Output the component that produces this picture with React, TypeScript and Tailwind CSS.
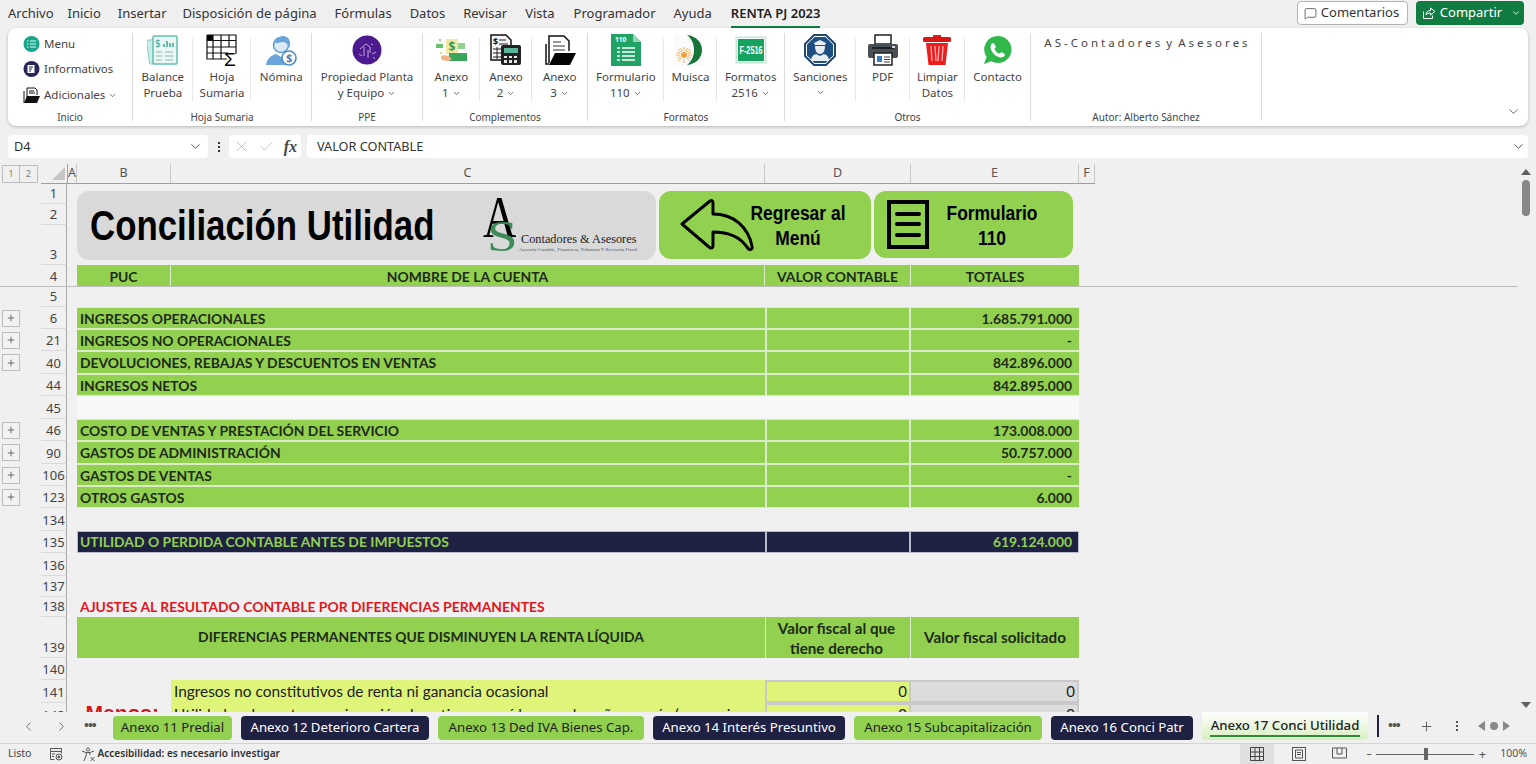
import type { ReactNode } from "react";
import { Check, ChevronDown, ChevronLeft, ChevronRight, MessageSquare, Plus, X } from "lucide-react";

const sheetFont = "font-['Lato','Noto_Sans',sans-serif]";
const narrowFont = "font-['Liberation_Sans',sans-serif]";

function MenuBar() {
  return (
    <div className="flex h-[28px] items-start justify-between pl-[8px] pr-[12px]">
      <div className="flex h-[28px] items-center gap-[18px] text-[13px] text-[#333]">
        <span className="-mr-[4px]">Archivo</span>
        <span className="-mr-[1px]">Inicio</span>
        <span className="-mr-[2px]">Insertar</span>
        <span>Disposición de página</span>
        <span>Fórmulas</span>
        <span>Datos</span>
        <span>Revisar</span>
        <span className="mr-[1px]">Vista</span>
        <span>Programador</span>
        <span className="mr-[1px]">Ayuda</span>
        <span className="relative font-semibold text-[#222]">
          RENTA PJ 2023
          <span className="absolute -bottom-[4px] left-0 right-0 h-[2px] bg-[#107c41]" />
        </span>
      </div>
      <div className="flex items-center gap-[8px] pt-[1px] text-[13px]">
        <button type="button" className="flex h-[24px] w-[111px] items-center justify-center gap-[4px] rounded-[4px] border border-[#b5b5b5] bg-white pr-[2px] text-[#333]">
          <MessageSquare size={13} strokeWidth={1.3} />
          Comentarios
        </button>
        <button type="button" className="flex h-[24px] w-[108px] items-center justify-center gap-[4px] rounded-[4px] bg-[#107c41] pl-[3px] text-white">
          <svg width="14" height="14" viewBox="0 0 14 14" fill="none" stroke="#fff" strokeWidth="1" strokeLinejoin="round">
            <path d="M1.500 5.500v7h9v-3" />
            <path d="M4 9c0-3 2-4.500 4.500-4.500V2l4.500 3.500-4.500 3.500V7C6.500 7 5 7.500 4 9Z" />
          </svg>
          Compartir
          <ChevronDown size={10} className="ml-[5px]" />
        </button>
      </div>
    </div>
  );
}

function Svg({ children, w = 32, h = 32 }: { children: ReactNode; w?: number; h?: number }) {
  return (
    <svg width={w} height={h} viewBox={`0 0 ${w} ${h}`}>
      {children}
    </svg>
  );
}

const icons: Record<string, ReactNode> = {
  balance: (
    <Svg>
      <rect x="1" y="5" width="20" height="24" rx="1.5" fill="#cdeee7" stroke="#7fcfc0" transform="rotate(-8 11 17)" />
      <rect x="6" y="2" width="24" height="28" rx="1" fill="#eaf8f5" stroke="#62bfb0" strokeWidth="1.5" />
      <text x="8" y="13" fontSize="10" fill="#4aa596">$</text>
      <path d="M17 13v-3M20 13V7M23 13v-4M26 13V9" stroke="#4aa596" strokeWidth="1.6" />
      <path d="M9 18h6M18 18h8M9 22h6M18 22h8M9 26h6M18 26h8" stroke="#8fb7b0" strokeWidth="1.2" />
    </Svg>
  ),
  sumaria: (
    <Svg>
      <rect x="1" y="1" width="6" height="5" fill="#000" />
      <path d="M1 1h29v19M1 1v24h20M1 6.500h29M1 13h29M1 19h21M7 1v24M15 1v24M23 1v12" fill="none" stroke="#111" strokeWidth="1.2" />
      <text x="18" y="32" fontSize="19" fontFamily="Liberation Sans" fill="#000" fontWeight="400">Σ</text>
    </Svg>
  ),
  nomina: (
    <Svg>
      <circle cx="16" cy="11" r="7.500" fill="#dbe9f7" stroke="#5b9bd5" strokeWidth="1.5" />
      <path d="M10 9c2-7 9-9 13-5 2 2 3 6 1 10-1-5-4-6-7-6-3 1-6 1-7 1Z" fill="#6aa6dc" />
      <path d="M1 31c1-7 6-10 10-11l5 3 4-3 4 2v9Z" fill="#6aa6dc" />
      <circle cx="24" cy="24" r="7" fill="#fff" stroke="#4c8fcb" strokeWidth="1.6" />
      <text x="21" y="28" fontSize="11" fontWeight="700" fill="#3f83c1">$</text>
    </Svg>
  ),
  ppe: (
    <Svg>
      <circle cx="16" cy="16" r="14.500" fill="#4c1a8e" />
      <path d="M9 15l6-5 4 3v6M13 13v9M17 16v8M21 20l4-2M8 20l3 2M20 10l2 1M22 23l2 2" stroke="#c9b6e8" strokeWidth="0.9" fill="none" />
    </Svg>
  ),
  anexo1: (
    <Svg w={34} h={26}>
      <rect x="12" y="2" width="12" height="15" fill="#f3e7a4" />
      <text x="14.500" y="14" fontSize="12" fontWeight="700" fill="#3f9b4b">$</text>
      <rect x="24" y="6" width="7" height="6" fill="#8fd18f" />
      <rect x="2" y="7" width="7" height="4" fill="#69c06d" />
      <rect x="15" y="16" width="18" height="8" fill="#37a65a" />
      <path d="M7 19c4-2 8 0 11 3-4 3-8 2-11 0Z" fill="#f4b183" />
      <circle cx="6" cy="3" r="1" fill="#6cc070" />
      <circle cx="7" cy="16" r="1" fill="#e5c64a" />
    </Svg>
  ),
  anexo2: (
    <Svg>
      <path d="M1 1h15l5 5v20H1Z" fill="#f4f4f4" stroke="#111" strokeWidth="1.5" />
      <text x="3" y="11" fontSize="9" fontWeight="700" fill="#111">$</text>
      <path d="M9 6h7M9 10h9M3 15h8M3 19h8M3 23h8M7 13v12" stroke="#222" />
      <rect x="11" y="11" width="20" height="20" rx="2" fill="#222" />
      <rect x="14" y="14" width="14" height="5" fill="#59b7a0" />
      <path d="M14 22h3v2h-3ZM19 22h3v2h-3ZM24 22h3v2h-3ZM14 26h3v3h-3ZM19 26h3v3h-3ZM24 26h3v3h-3Z" fill="#e5e5e5" />
    </Svg>
  ),
  anexo3: (
    <Svg>
      <path d="M5 29V2h15l5 5v10" fill="#fff" stroke="#111" strokeWidth="1.5" />
      <path d="M9 8h8M9 12h12M9 16h12" stroke="#333" />
      <path d="M2 10v20h3" fill="none" stroke="#111" strokeWidth="1.5" />
      <path d="M5 31l6-12h21l-6 12Z" fill="#050505" />
    </Svg>
  ),
  formulario: (
    <Svg w={32} h={32}>
      <path d="M1 0h22l8 8v24H1Z" fill="#21a366" />
      <path d="M23 0l8 8h-8Z" fill="#8fd6b0" />
      <text x="5" y="8" fontSize="6.500" fontWeight="700" fill="#fff">110</text>
      <path d="M7 14h3M12 14h13M7 18h3M12 18h13M7 22h3M12 22h13M7 26h3M12 26h13" stroke="#fff" strokeWidth="1.4" />
    </Svg>
  ),
  muisca: (
    <Svg>
      <rect x="0" y="0" width="30" height="32" fill="#fbfbfb" />
      <path d="M13 1c9 1 15 7 15 15s-6 14-15 15c5-4 7-9 7-15S18 5 13 1Z" fill="#16763a" />
      <circle cx="10" cy="21" r="3" fill="#f2a23a" />
      <path d="M10 13v4M10 25v4M2 21h4M14 21h4M4 15l3 3M16 15l-3 3M4 27l3-3M16 27l-3-3M6.500 14l1.500 3.500M13.500 14L12 17.500M3 18l3.500 1.500M17 18l-3.500 1.500M3 24l3.500-1.500M17 24l-3.500-1.500" stroke="#f4b563" strokeWidth="1" />
    </Svg>
  ),
  formatos: (
    <Svg w={32} h={28}>
      <rect x="0.500" y="0.500" width="31" height="27" fill="#c4e8d2" />
      <rect x="2.500" y="2.500" width="27" height="23" fill="#16a360" />
      <rect x="2.500" y="2.500" width="27" height="23" fill="none" stroke="#fff" strokeWidth="1" />
      <text x="4.500" y="18" fontSize="10.500" fontWeight="700" fontFamily="Liberation Sans" fill="#fff" textLength="23" lengthAdjust="spacingAndGlyphs">
        F-2516
      </text>
    </Svg>
  ),
  sanciones: (
    <Svg>
      <path d="M10 1h12l9 9v12l-9 9H10l-9-9V10Z" fill="#fff" stroke="#22476f" strokeWidth="2" />
      <path d="M10.500 3h11L29 10.500v11L21.500 29h-11L3 21.500v-11Z" fill="#1d4f83" />
      <path d="M10 9l6-3 6 3-1 2H11Z" fill="#e8eef4" />
      <path d="M11 12h10c0 5-2 8-5 8s-5-3-5-8Z" fill="#e8eef4" />
      <path d="M7 27c0-4 2-6 5-7l4 2 4-2c3 1 5 3 5 7Z" fill="#e8eef4" />
    </Svg>
  ),
  pdf: (
    <Svg>
      <path d="M8 1h16v9H8Z" fill="#fff" stroke="#222" strokeWidth="1.5" />
      <rect x="1" y="10" width="30" height="14" rx="2" fill="#4a4f54" />
      <rect x="5" y="13" width="22" height="2" fill="#1f2226" />
      <rect x="25" y="12" width="3" height="2" fill="#d8d8d8" />
      <path d="M7 19h18v12H7Z" fill="#fff" stroke="#222" strokeWidth="1.5" />
      <rect x="10" y="22" width="5" height="6" fill="#3d7dbb" />
      <path d="M17 23h6M17 25.500h6M17 28h6" stroke="#444" />
    </Svg>
  ),
  limpiar: (
    <Svg>
      <path d="M12 1h8v2h-8Z" fill="#e21a1a" />
      <rect x="2" y="3" width="28" height="5" rx="1.500" fill="#d81616" />
      <path d="M5 9h22l-2.500 22h-17Z" fill="#ee1c1c" />
      <path d="M10 12l1 15M14 12l1 15M18 12l-1 15M22 12l-1 15" stroke="#ffb3b3" strokeWidth="1.3" />
    </Svg>
  ),
  contacto: (
    <Svg>
      <path d="M16 2a13.500 13.500 0 0 1 0 27c-2.500 0-4.700-.6-6.700-1.700L2 30l2.600-7A13.500 13.500 0 0 1 16 2Z" fill="#30b84a" />
      <path d="M11 9c-1 0-2.500 1.500-2.500 4 0 5 6 10.500 10.500 10.500 2.500 0 4-1.500 4-3 0-.6-3-2.300-3.800-2.300-.6 0-1.300 1.400-1.900 1.400-1.500 0-4.700-3.200-4.700-4.500 0-.7 1.300-1.300 1.300-2C13.900 12 12 9 11 9Z" fill="#fff" />
    </Svg>
  ),
};

function RibbonButton({ icon, lines, arrow, width, last }: { icon: string; lines: string[]; arrow?: boolean; width: string; last?: boolean }) {
  return (
    <div className={`relative flex h-[68px] flex-col items-center ${width}`}>
      <div className="flex h-[34px] items-center justify-center">{icons[icon]}</div>
      <div className="flex flex-col items-center pt-[2px] text-[11.500px] leading-[16px] text-[#444]">
        {lines.map((line, i) => (
          <span key={line} className="flex items-center gap-[3px] whitespace-nowrap">
            {line}
            {arrow && lines.length > 1 && i === lines.length - 1 && <ChevronDown size={9} />}
          </span>
        ))}
        {arrow && lines.length === 1 && <ChevronDown size={9} className="mt-[3px]" />}
      </div>
      {!last && <span className="absolute right-0 top-[5px] h-[63px] w-px bg-[#e8e8e8]" />}
    </div>
  );
}

function RibbonGroup({ label, width, children }: { label: string; width: string; children: ReactNode }) {
  return (
    <div className={`flex h-[88px] flex-col border-r border-[#dcdcdc] ${width}`}>
      <div className="flex h-[68px] shrink-0">{children}</div>
      <div className="mt-[8px] h-[16px] shrink-0 text-center text-[10px] leading-[16px] text-[#444]">{label}</div>
    </div>
  );
}

function Ribbon() {
  return (
    <div className="relative mx-[8px] flex h-[98px] rounded-[8px] bg-white pt-[5px] shadow-[0_1px_3px_rgba(0,0,0,0.25)]">
      <RibbonGroup label="Inicio" width="w-[125px]">
        <div className="flex flex-col gap-[7px] pl-[15px] pt-[2px] text-[11.500px] leading-[18px] text-[#444]">
          <div className="flex items-center gap-[4px]">
            <svg width="17" height="18" viewBox="0 0 17 18">
              <circle cx="8.500" cy="9" r="8" fill="#17a689" />
              <path d="M4 6h1.500M7 6h6M4 9h1.500M7 9h6M4 12h1.500M7 12h6" stroke="#e7fff8" />
            </svg>
            Menu
          </div>
          <div className="flex items-center gap-[4px]">
            <svg width="17" height="18" viewBox="0 0 17 18">
              <circle cx="8.500" cy="9" r="8" fill="#25255a" />
              <path d="M4.500 5h7v8h-7Z" fill="#fff" />
              <path d="M6 7h4M6 9h3M6 11h2" stroke="#25255a" />
            </svg>
            Informativos
          </div>
          <div className="flex items-center gap-[4px] pt-[1px]">
            <svg width="17" height="18" viewBox="0 0 17 18">
              <path d="M4 14V2h8l2 2v5" fill="#fff" stroke="#111" />
              <path d="M6 5h5M6 7h6M1 5v12" stroke="#111" />
              <path d="M1 17l3-7h13l-3 7Z" fill="#111" />
            </svg>
            <span className="flex items-center gap-[3px]">
              Adicionales
              <ChevronDown size={9} />
            </span>
          </div>
        </div>
      </RibbonGroup>
      <RibbonGroup label="Hoja Sumaria" width="w-[179px]">
        <RibbonButton icon="balance" lines={["Balance", "Prueba"]} width="w-[60px]" />
        <RibbonButton icon="sumaria" lines={["Hoja", "Sumaria"]} width="w-[59px]" />
        <RibbonButton icon="nomina" lines={["Nómina"]} width="w-[60px]" last />
      </RibbonGroup>
      <RibbonGroup label="PPE" width="w-[111px]">
        <RibbonButton icon="ppe" lines={["Propiedad Planta", "y Equipo"]} arrow width="w-[111px]" last />
      </RibbonGroup>
      <RibbonGroup label="Complementos" width="w-[165px]">
        <RibbonButton icon="anexo1" lines={["Anexo", "1"]} arrow width="w-[57px]" />
        <RibbonButton icon="anexo2" lines={["Anexo", "2"]} arrow width="w-[53px]" />
        <RibbonButton icon="anexo3" lines={["Anexo", "3"]} arrow width="w-[55px]" last />
      </RibbonGroup>
      <RibbonGroup label="Formatos" width="w-[197px]">
        <RibbonButton icon="formulario" lines={["Formulario", "110"]} arrow width="w-[76px]" />
        <RibbonButton icon="muisca" lines={["Muisca"]} width="w-[54px]" />
        <RibbonButton icon="formatos" lines={["Formatos", "2516"]} arrow width="w-[67px]" last />
      </RibbonGroup>
      <RibbonGroup label="Otros" width="w-[246px]">
        <RibbonButton icon="sanciones" lines={["Sanciones"]} arrow width="w-[71px]" />
        <RibbonButton icon="pdf" lines={["PDF"]} width="w-[54px]" />
        <RibbonButton icon="limpiar" lines={["Limpiar", "Datos"]} width="w-[56px]" />
        <RibbonButton icon="contacto" lines={["Contacto"]} width="w-[65px]" last />
      </RibbonGroup>
      <RibbonGroup label="Autor: Alberto Sánchez" width="w-[231px]">
        <div className="w-full whitespace-nowrap pt-[2px] text-center text-[11.500px] leading-[16px] text-[#444]">
          A S - C o n t a d o r e s &nbsp;y&nbsp; A s e s o r e s
        </div>
      </RibbonGroup>
      <ChevronDown size={15} strokeWidth={1.3} className="absolute bottom-[7px] right-[7px] text-[#444]" />
    </div>
  );
}

function FormulaBar() {
  return (
    <div className="mt-[9px] flex h-[23px] items-stretch pl-[8px] pr-[8px] text-[12.700px] text-[#333]">
      <div className="flex w-[200px] items-center justify-between rounded-[4px] bg-white pl-[6px] pr-[5px]">
        D4
        <ChevronDown size={15} strokeWidth={1.3} />
      </div>
      <div className="flex w-[21px] flex-col items-center justify-center gap-[2px]">
        <span className="h-[2px] w-[2px] bg-[#333]" />
        <span className="h-[2px] w-[2px] bg-[#333]" />
        <span className="h-[2px] w-[2px] bg-[#333]" />
      </div>
      <div className="flex w-[72px] items-center justify-between rounded-[4px] bg-white px-[4px] text-[#aaa]">
        <X size={17} strokeWidth={1} />
        <Check size={17} strokeWidth={1} />
        <span className="font-['Liberation_Serif',serif] text-[16px] font-bold italic text-[#444]">fx</span>
      </div>
      <div className="ml-[6px] flex flex-1 items-center justify-between rounded-[4px] bg-white pl-[10px] pr-[2px]">
        VALOR CONTABLE
        <ChevronDown size={15} strokeWidth={1.3} />
      </div>
    </div>
  );
}

function ColumnHeaders() {
  const cols: [string, string][] = [
    ["A", "w-[9px]"],
    ["B", "w-[94px]"],
    ["C", "w-[594px]"],
    ["D", "w-[146px]"],
    ["E", "w-[168px]"],
    ["F", "w-[16px]"],
  ];
  return (
    <div className="flex h-[20px] text-[12.500px] text-[#555]">
      <div className="flex w-[41px] items-start pl-[2px] pt-[1px]">
        <div className="flex h-[18px] w-[36px] border border-[#bdbdbd] text-[8.500px] leading-[16px] text-[#777]">
          <span className="w-[18px] border-r border-[#bdbdbd] text-center">1</span>
          <span className="w-[18px] text-center">2</span>
        </div>
      </div>
      <div className="relative w-[26px] border-b border-[#9f9f9f]">
        <span className="absolute bottom-[3px] right-[2px] h-0 w-0 border-b-[13px] border-l-[13px] border-b-[#c6c6c6] border-l-transparent" />
      </div>
      <div className="flex border-b border-l border-[#9f9f9f]">
        {cols.map(([name, width]) => (
          <div key={name} className={`flex items-center justify-center border-r border-[#c8c8c8] ${width}`}>
            {name}
          </div>
        ))}
      </div>
    </div>
  );
}

function RowNumber({ label, height, line }: { label: string; height: string; line?: boolean }) {
  return (
    <div className={`flex w-[26px] items-end justify-center border-r border-[#a9a9a9] text-[13px] leading-[19px] text-[#444] ${height} ${line ? "" : "border-b border-b-[#d9d9d9]"}`}>
      {label}
    </div>
  );
}

function Row({ label, height, plus, freeze, children }: { label: string; height: string; plus?: boolean; freeze?: boolean; children?: ReactNode }) {
  return (
    <div className={`flex ${height} ${freeze ? "box-content border-b border-[#bcbcbc]" : ""}`}>
      <div className="flex w-[41px] items-center pl-[2px]">
        {plus && (
          <span className="flex h-[17px] w-[18px] items-center justify-center border border-[#bdbdbd] bg-[#f2f2f2] text-[#555]">
            <Plus size={10} strokeWidth={2} />
          </span>
        )}
      </div>
      <RowNumber label={label} height={height} line={freeze} />
      <div className={`flex flex-1 pl-[10px] ${sheetFont}`}>{children}</div>
    </div>
  );
}

function GreenRow({ label, height, name, total, plus }: { label: string; height: string; name: string; total?: string; plus?: boolean }) {
  return (
    <Row label={label} height={height} plus={plus}>
      <div className="flex border-y border-[#dcebc8] bg-[#92d050] pt-[1px] text-[13.900px] font-bold leading-none text-[#1d2b18]">
        <div className="flex w-[688px] items-center pl-[3px]">{name}</div>
        <div className="-mt-[1px] w-[146px] border-x-2 border-[#dcebc8]" />
        <div className="flex w-[168px] items-center justify-end pr-[7px]">{total}</div>
      </div>
    </Row>
  );
}

function DarkRow() {
  return (
    <Row label="135" height="h-[22px]">
      <div className="flex border border-[#b9bccb] bg-[#1f2143] text-[13.900px] font-bold leading-none text-[#92d050]">
        <div className="flex w-[687px] items-center pl-[2px]">UTILIDAD O PERDIDA CONTABLE ANTES DE IMPUESTOS</div>
        <div className="w-[146px] border-x-2 border-[#b9bccb]" />
        <div className="flex w-[167px] items-center justify-end pr-[6px]">619.124.000</div>
      </div>
    </Row>
  );
}

function Banner() {
  return (
    <div className="flex">
      <div className="w-[41px]" />
      <div>
        <RowNumber label="1" height="h-[20px]" />
        <RowNumber label="2" height="h-[21px]" />
        <RowNumber label="3" height="h-[40px]" />
      </div>
      <div className="flex items-start gap-[3px] pl-[10px] pt-[7px]">
        <div className="relative flex h-[69px] w-[579px] items-center rounded-[12px] bg-[#d9d9d9] pl-[13px]">
          <span className={`${narrowFont} origin-left scale-x-[0.81] whitespace-nowrap text-[43px] font-bold leading-none text-black`}>Conciliación Utilidad</span>
          <span className="absolute left-[406px] top-[-2px] origin-left scale-x-[0.77] font-['Liberation_Serif',serif] text-[60px] leading-[56px] text-black">A</span>
          <span className="absolute left-[410px] top-[18px] origin-left scale-x-[1.25] font-['Liberation_Serif',serif] text-[44px] leading-[56px] text-[#3d8b57]">S</span>
          <span className="absolute left-[444px] top-[40px] whitespace-nowrap font-['Liberation_Serif',serif] text-[12.300px] leading-[16px] text-[#222]">Contadores &amp; Asesores</span>
          <span className="absolute left-[442px] top-[56px] whitespace-nowrap font-['Liberation_Serif',serif] text-[4.900px] leading-[6px] text-[#555]">Asesoría Contable, Financiera, Tributaria Y Revisoría Fiscal</span>
        </div>
        <div className="flex h-[68px] w-[212px] items-center rounded-[12px] bg-[#92d050] pl-[21px]">
          <svg width="74" height="52" viewBox="0 0 74 52" fill="none" stroke="#000" strokeWidth="3" strokeLinejoin="round" strokeLinecap="round" className="shrink-0">
            <path d="M2 25 L30 2 C32 1 33 2 33 4 L33 15 C54 15 68 28 72 47 C73 51 69 52 67 48 C60 38 48 33 33 33 L33 47 C33 49 31 50 29 48 Z" />
          </svg>
          <div className={`${narrowFont} -ml-[14px] w-[116px] shrink-0 scale-x-[0.83] whitespace-nowrap text-center text-[21px] font-bold leading-[25px] text-black`}>
            Regresar al
            <br />
            Menú
          </div>
        </div>
        <div className="flex h-[67px] w-[199px] items-center rounded-[12px] bg-[#92d050] pl-[13px]">
          <svg width="42" height="49" viewBox="0 0 42 49" fill="none" stroke="#000" strokeWidth="4">
            <rect x="2" y="2" width="38" height="45" />
            <path d="M10 14h22M10 24h22M10 35h22" strokeLinecap="round" />
          </svg>
          <div className={`${narrowFont} w-[126px] scale-x-[0.83] whitespace-nowrap text-center text-[21px] font-bold leading-[25px] text-black`}>
            Formulario
            <br />
            110
          </div>
        </div>
      </div>
    </div>
  );
}

function ValueRow({ label, height, name, lead }: { label: string; height: string; name: string; lead?: string }) {
  return (
    <Row label={label} height={height}>
      <div className="relative flex w-[94px] items-start justify-end pr-[12px]">
        {lead && <span className="absolute right-[12px] top-[-4px] font-['Liberation_Sans',sans-serif] text-[21px] font-bold leading-[28px] text-[#d9141c]">{lead}</span>}
      </div>
      <div className="flex w-[594px] items-center overflow-hidden whitespace-nowrap bg-[#dff57a] pl-[3px] text-[15.400px] leading-none text-[#222]">{name}</div>
      <div className="flex w-[146px] items-center justify-end border-2 border-[#c9c9c9] bg-[#dff57a] pr-[2px] text-[15px] leading-none text-[#222]">0</div>
      <div className="flex w-[168px] items-center justify-end border-2 border-l-0 border-[#c9c9c9] bg-[#dcdcdc] pr-[2px] text-[15px] leading-none text-[#222]">0</div>
    </Row>
  );
}

function Sheet() {
  return (
    <div className="flex min-h-0 flex-1">
      <div className="min-w-0 flex-1 overflow-hidden">
        <ColumnHeaders />
        <Banner />
        <Row label="4" height="h-[21px]" freeze>
          <div className="flex bg-[#92d050] text-[13.900px] font-bold leading-[23px] text-[#1d2b18]">
            <div className="w-[94px] border-r border-[#dcebc8] text-center">PUC</div>
            <div className="w-[594px] border-r border-[#dcebc8] text-center">NOMBRE DE LA CUENTA</div>
            <div className="w-[146px] border-r border-[#dcebc8] text-center">VALOR CONTABLE</div>
            <div className="w-[168px] text-center">TOTALES</div>
          </div>
        </Row>
        <Row label="5" height="h-[20px]" />
        <GreenRow label="6" height="h-[22px]" plus name="INGRESOS OPERACIONALES" total="1.685.791.000" />
        <GreenRow label="21" height="h-[22px]" plus name="INGRESOS NO OPERACIONALES" total="-" />
        <GreenRow label="40" height="h-[23px]" plus name="DEVOLUCIONES, REBAJAS Y DESCUENTOS EN VENTAS" total="842.896.000" />
        <GreenRow label="44" height="h-[22px]" name="INGRESOS NETOS" total="842.895.000" />
        <Row label="45" height="h-[23px]">
          <div className="my-[1px] w-[1002px] bg-[#f8f8f8]" />
        </Row>
        <GreenRow label="46" height="h-[22px]" plus name="COSTO DE VENTAS Y PRESTACIÓN DEL SERVICIO" total="173.008.000" />
        <GreenRow label="90" height="h-[23px]" plus name="GASTOS DE ADMINISTRACIÓN" total="50.757.000" />
        <GreenRow label="106" height="h-[22px]" plus name="GASTOS DE VENTAS" total="-" />
        <GreenRow label="123" height="h-[22px]" plus name="OTROS GASTOS" total="6.000" />
        <Row label="134" height="h-[23px]" />
        <DarkRow />
        <Row label="136" height="h-[23px]" />
        <Row label="137" height="h-[21px]" />
        <Row label="138" height="h-[20px]">
          <div className="flex items-center pl-[3px] text-[13.900px] font-bold leading-none text-[#e3141c]">
            AJUSTES AL RESULTADO CONTABLE POR DIFERENCIAS PERMANENTES
          </div>
        </Row>
        <Row label="139" height="h-[41px]">
          <div className="flex bg-[#92d050] font-bold text-[#1d2b18]">
            <div className="flex w-[688px] items-center justify-center text-[13.900px]">DIFERENCIAS PERMANENTES QUE DISMINUYEN LA RENTA LÍQUIDA</div>
            <div className="flex w-[146px] items-center justify-center border-x border-[#dcebc8] pr-[3px] text-center text-[15.200px] leading-[20px]">
              Valor fiscal al que
              <br />
              tiene derecho
            </div>
            <div className="flex w-[168px] items-center justify-center text-[15.200px]">Valor fiscal solicitado</div>
          </div>
        </Row>
        <Row label="140" height="h-[22px]" />
        <ValueRow label="141" height="h-[23px]" name="Ingresos no constitutivos de renta ni ganancia ocasional" />
        <ValueRow
          label="142"
          height="h-[23px]"
          name="Utilidad en la venta o enajenación de activos poseídos por dos años o más (ganancia"
          lead="Menos:"
        />
      </div>
      <div className="flex w-[18px] flex-col items-center pr-[2px] pt-[5px] text-[#555]">
        <span className="h-0 w-0 border-x-[5px] border-b-[6px] border-x-transparent border-b-[#606060]" />
        <span className="mt-[5px] h-[36px] w-[8px] rounded-full bg-[#878787]" />
        <span className="mt-auto mb-[4px] h-0 w-0 border-x-[5px] border-t-[6px] border-x-transparent border-t-[#606060]" />
      </div>
    </div>
  );
}

const sheetTabs: [string, string, boolean][] = [
  ["Anexo 11 Predial", "w-[119px]", false],
  ["Anexo 12 Deterioro Cartera", "w-[188px]", true],
  ["Anexo 13 Ded IVA Bienes Cap.", "w-[206px]", false],
  ["Anexo 14 Interés Presuntivo", "w-[192px]", true],
  ["Anexo 15 Subcapitalización", "w-[188px]", false],
  ["Anexo 16 Conci Patr", "w-[142px]", true],
];

function Dots() {
  return <span className="text-[13px] font-bold leading-none tracking-[-1px] text-[#555]">•••</span>;
}

function TabBar() {
  return (
    <div className="flex h-[31px] items-start bg-[#f0f0f0] text-[13.200px]">
      <div className="flex h-[28px] w-[113px] items-center text-[#555]">
        <ChevronLeft size={15} strokeWidth={1.3} className="ml-[21px]" />
        <ChevronRight size={15} strokeWidth={1.3} className="ml-[18px]" />
        <span className="ml-[15px]">
          <Dots />
        </span>
      </div>
      <div className="flex gap-[9px] pt-[4px]">
        {sheetTabs.map(([name, width, dark]) => (
          <div key={name} className={`flex h-[24px] items-center justify-center whitespace-nowrap rounded-[4px] ${width} ${dark ? "bg-[#1f2143] text-white" : "bg-[#92d050] text-[#222]"}`}>
            {name}
          </div>
        ))}
        <div className="-mt-[4px] flex h-[28px] w-[166px] flex-col items-center justify-center rounded-b-[4px] bg-gradient-to-b from-white to-[#d8efc0] font-medium text-[#222]">
          <span className="border-b-2 border-[#2e8b3d] px-[1px] leading-[20px]">Anexo 17 Conci Utilidad</span>
        </div>
      </div>
      <div className="ml-[9px] flex h-[28px] items-center">
        <span className="h-[22px] w-[2px] bg-[#1f2143]" />
        <span className="ml-[9px]">
          <Dots />
        </span>
        <Plus size={15} strokeWidth={1.3} className="ml-[19px] text-[#444]" />
        <span className="ml-[22px] flex flex-col gap-[2px]">
          <span className="h-[2px] w-[2px] bg-[#555]" />
          <span className="h-[2px] w-[2px] bg-[#555]" />
          <span className="h-[2px] w-[2px] bg-[#555]" />
        </span>
        <span className="ml-[20px] flex items-center gap-[5px]">
          <span className="h-0 w-0 border-y-[5px] border-r-[7px] border-y-transparent border-r-[#888]" />
          <span className="h-[8px] w-[8px] rounded-full bg-[#888]" />
          <span className="h-0 w-0 border-y-[5px] border-l-[7px] border-y-transparent border-l-[#888]" />
        </span>
      </div>
    </div>
  );
}

function StatusBar() {
  return (
    <div className="flex h-[21px] items-center border-t border-[#d4d4d4] pl-[8px] text-[10.500px] text-[#444]">
      <span>Listo</span>
      <svg width="14" height="14" viewBox="0 0 14 14" className="ml-[18px]" fill="none" stroke="#555">
        <path d="M1.500 1.500h11v3h-11ZM1.500 4.500v8h4M12.500 4.500v2M3 7h3M3 9.500h2" />
        <circle cx="10" cy="10" r="3" />
        <circle cx="10" cy="10" r="1" fill="#555" />
      </svg>
      <svg width="15" height="15" viewBox="0 0 15 15" className="ml-[18px] mr-[1px]" fill="none" stroke="#444" strokeWidth="0.9">
        <circle cx="7" cy="2.500" r="1.500" />
        <path d="M1 4l4 1.500h4L13 4M5.500 6l-.5 3-2 5M8.500 6l.5 2M9.500 10l4 4M13.500 10l-4 4" />
      </svg>
      <span className="text-[10.100px] font-semibold text-[#333]">Accesibilidad: es necesario investigar</span>
      <div className="ml-auto flex h-full items-center text-[#555]">
        <span className="flex h-[20px] w-[34px] items-center justify-center bg-[#e0e0e0]">
          <svg width="14" height="14" viewBox="0 0 14 14" fill="none" stroke="#444">
            <path d="M.500.500h13v13H.500ZM.500 5h13M.500 9.500h13M5 .500v13M9.500 .500v13" />
          </svg>
        </span>
        <svg width="14" height="14" viewBox="0 0 14 14" className="ml-[18px]" fill="none" stroke="#555">
          <rect x="0.500" y="0.500" width="13" height="13" />
          <path d="M3.500 3h7v8h-7ZM5 5.500h4M5 7.500h4" />
        </svg>
        <svg width="15" height="14" viewBox="0 0 15 14" className="ml-[26px]" fill="none" stroke="#555">
          <path d="M.500 1h14v10H.500ZM5 1v6h5V1" />
        </svg>
        <span className="ml-[20px]">–</span>
        <span className="relative ml-[4px] h-px w-[98px] bg-[#666]">
          <span className="absolute left-[48px] top-[-6px] h-[12px] w-[4px] bg-[#666]" />
        </span>
        <span className="ml-[5px] text-[13px] leading-none">+</span>
        <span className="ml-[14px] mr-[9px]">100%</span>
      </div>
    </div>
  );
}

export default function App() {
  return (
    <div className="flex h-[764px] w-[1536px] flex-col overflow-hidden bg-[#f0f0f0] font-['Noto_Sans',sans-serif]">
      <MenuBar />
      <Ribbon />
      <FormulaBar />
      <div className="mt-[6px] flex min-h-0 flex-1 flex-col">
        <Sheet />
        <TabBar />
        <StatusBar />
      </div>
    </div>
  );
}
